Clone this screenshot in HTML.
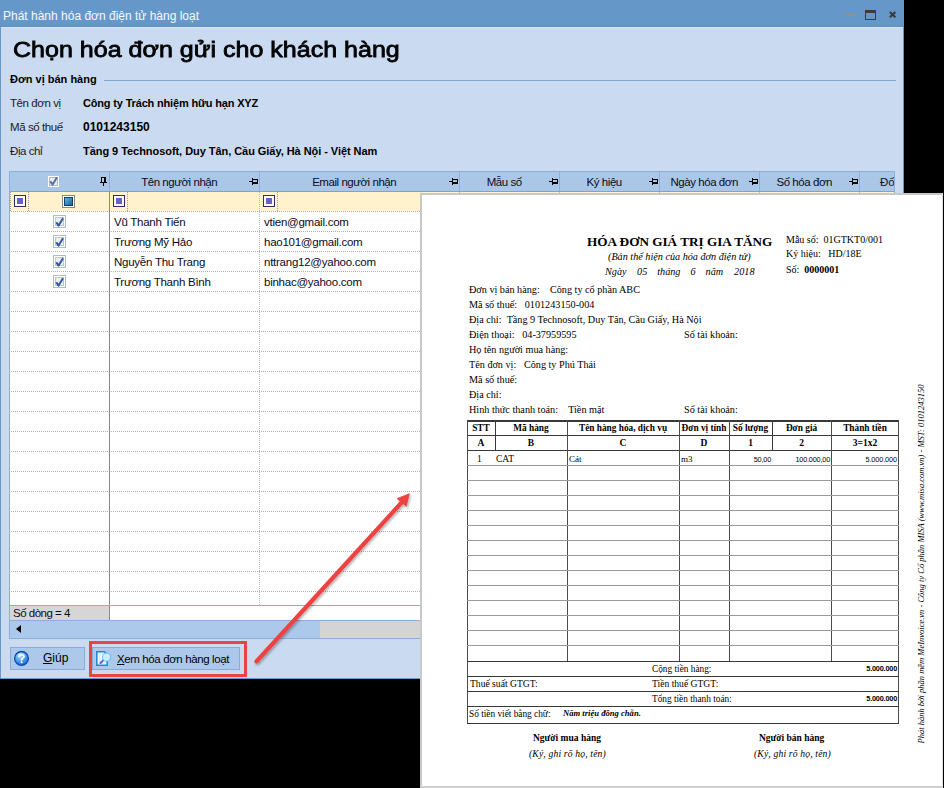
<!DOCTYPE html><html><head><meta charset="utf-8"><style>
*{margin:0;padding:0;box-sizing:border-box}
html,body{width:944px;height:788px;overflow:hidden;background:#000}
body{position:relative;font-family:"Liberation Sans",sans-serif;font-size:11px;color:#000}
.a{position:absolute;white-space:nowrap}
.s{font-family:"Liberation Serif",serif}
</style></head><body>
<div class="a" style="left:0px;top:0px;width:904px;height:679px;background:#CADBF1"></div>
<div class="a" style="left:0px;top:0px;width:904px;height:27px;background:#6697C9"></div>
<div class="a" style="left:0px;top:26px;width:904px;height:1px;background:#5E90C6"></div>
<div class="a" style="left:1px;top:27px;width:902px;height:1px;background:#DAE6F6"></div>
<div class="a" style="left:0px;top:27px;width:1px;height:652px;background:#6697C9"></div>
<div class="a" style="left:903px;top:27px;width:1px;height:652px;background:#6697C9"></div>
<div class="a" style="left:0px;top:678px;width:904px;height:1px;background:#6697C9"></div>
<div class="a" style="left:3px;top:8px;font-size:12px;line-height:16px;color:#f6f9fc">Phát hành hóa đơn điện tử hàng loạt</div>
<div class="a" style="left:846px;top:14px;width:9px;height:2px;background:#9A8E88"></div>
<div class="a" style="left:865px;top:10px;width:11px;height:10px;border:1.5px solid #3c3c3c;border-top-width:3px"></div>
<svg class="a" style="left:888px;top:10px" width="10" height="10" viewBox="0 0 10 10"><path d="M1.9 2L7.4 7.3M7.4 2L1.9 7.3" stroke="#3a3a3a" stroke-width="2"/></svg>
<div class="a" style="left:13px;top:36px;font-size:22px;line-height:28px;-webkit-text-stroke:0.8px #000;transform-origin:0 0;transform:scaleX(1.138)">Chọn hóa đơn gửi cho khách hàng</div>
<div class="a" style="left:10px;top:71.5px;font-size:11px;font-weight:bold;line-height:14px">Đơn vị bán hàng</div>
<div class="a" style="left:104px;top:80px;width:792px;height:1px;background:#7FA3D3"></div>
<div class="a" style="left:10px;top:96px;font-size:11.5px;line-height:14px;color:#1a1a2a;letter-spacing:-0.42px">Tên đơn vị</div>
<div class="a" style="left:83px;top:96px;font-size:11px;font-weight:bold;line-height:15px;letter-spacing:-0.17px">Công ty Trách nhiệm hữu hạn XYZ</div>
<div class="a" style="left:10px;top:120px;font-size:11.5px;line-height:14px;color:#1a1a2a;letter-spacing:-0.42px">Mã số thuế</div>
<div class="a" style="left:83px;top:120px;font-size:12px;font-weight:bold;line-height:15px;letter-spacing:0px">0101243150</div>
<div class="a" style="left:10px;top:144px;font-size:11.5px;line-height:14px;color:#1a1a2a;letter-spacing:-0.42px">Địa chỉ</div>
<div class="a" style="left:83px;top:144px;font-size:11px;font-weight:bold;line-height:15px;letter-spacing:-0.05px">Tầng 9 Technosoft, Duy Tân, Cầu Giấy, Hà Nội - Việt Nam</div>
<div class="a" style="left:9px;top:171px;width:886px;height:468px;background:#fff"></div>
<div class="a" style="left:9px;top:171px;width:886px;height:21px;background:#ABC7E7;border-top:1px solid #86A9D8;border-bottom:1px solid #7FA2D2"></div>
<div class="a" style="left:109px;top:172px;width:1px;height:19px;background:#8CAEDA"></div>
<div class="a" style="left:259px;top:172px;width:1px;height:19px;background:#8CAEDA"></div>
<div class="a" style="left:459px;top:172px;width:1px;height:19px;background:#8CAEDA"></div>
<div class="a" style="left:559px;top:172px;width:1px;height:19px;background:#8CAEDA"></div>
<div class="a" style="left:659px;top:172px;width:1px;height:19px;background:#8CAEDA"></div>
<div class="a" style="left:759px;top:172px;width:1px;height:19px;background:#8CAEDA"></div>
<div class="a" style="left:859px;top:172px;width:1px;height:19px;background:#8CAEDA"></div>
<div class="a" style="left:110.2px;top:174.5px;width:138px;text-align:center;font-size:11.5px;line-height:15px;color:#0a0a1e;letter-spacing:-0.45px">Tên người nhận</div>
<div class="a" style="left:249px;top:181px;width:3px;height:1px;background:#000"></div>
<div class="a" style="left:252px;top:178px;width:1px;height:7px;background:#000"></div>
<div class="a" style="left:253px;top:179px;width:5px;height:1px;background:#000"></div>
<div class="a" style="left:257px;top:179px;width:1px;height:5px;background:#000"></div>
<div class="a" style="left:253px;top:182px;width:5px;height:2px;background:#000"></div>
<div class="a" style="left:260.2px;top:174.5px;width:188px;text-align:center;font-size:11.5px;line-height:15px;color:#0a0a1e;letter-spacing:-0.45px">Email người nhận</div>
<div class="a" style="left:449px;top:181px;width:3px;height:1px;background:#000"></div>
<div class="a" style="left:452px;top:178px;width:1px;height:7px;background:#000"></div>
<div class="a" style="left:453px;top:179px;width:5px;height:1px;background:#000"></div>
<div class="a" style="left:457px;top:179px;width:1px;height:5px;background:#000"></div>
<div class="a" style="left:453px;top:182px;width:5px;height:2px;background:#000"></div>
<div class="a" style="left:460.2px;top:174.5px;width:88px;text-align:center;font-size:11.5px;line-height:15px;color:#0a0a1e;letter-spacing:-0.45px">Mẫu số</div>
<div class="a" style="left:549px;top:181px;width:3px;height:1px;background:#000"></div>
<div class="a" style="left:552px;top:178px;width:1px;height:7px;background:#000"></div>
<div class="a" style="left:553px;top:179px;width:5px;height:1px;background:#000"></div>
<div class="a" style="left:557px;top:179px;width:1px;height:5px;background:#000"></div>
<div class="a" style="left:553px;top:182px;width:5px;height:2px;background:#000"></div>
<div class="a" style="left:560.2px;top:174.5px;width:88px;text-align:center;font-size:11.5px;line-height:15px;color:#0a0a1e;letter-spacing:-0.45px">Ký hiệu</div>
<div class="a" style="left:649px;top:181px;width:3px;height:1px;background:#000"></div>
<div class="a" style="left:652px;top:178px;width:1px;height:7px;background:#000"></div>
<div class="a" style="left:653px;top:179px;width:5px;height:1px;background:#000"></div>
<div class="a" style="left:657px;top:179px;width:1px;height:5px;background:#000"></div>
<div class="a" style="left:653px;top:182px;width:5px;height:2px;background:#000"></div>
<div class="a" style="left:660.2px;top:174.5px;width:88px;text-align:center;font-size:11.5px;line-height:15px;color:#0a0a1e;letter-spacing:-0.45px">Ngày hóa đơn</div>
<div class="a" style="left:749px;top:181px;width:3px;height:1px;background:#000"></div>
<div class="a" style="left:752px;top:178px;width:1px;height:7px;background:#000"></div>
<div class="a" style="left:753px;top:179px;width:5px;height:1px;background:#000"></div>
<div class="a" style="left:757px;top:179px;width:1px;height:5px;background:#000"></div>
<div class="a" style="left:753px;top:182px;width:5px;height:2px;background:#000"></div>
<div class="a" style="left:760.2px;top:174.5px;width:88px;text-align:center;font-size:11.5px;line-height:15px;color:#0a0a1e;letter-spacing:-0.45px">Số hóa đơn</div>
<div class="a" style="left:849px;top:181px;width:3px;height:1px;background:#000"></div>
<div class="a" style="left:852px;top:178px;width:1px;height:7px;background:#000"></div>
<div class="a" style="left:853px;top:179px;width:5px;height:1px;background:#000"></div>
<div class="a" style="left:857px;top:179px;width:1px;height:5px;background:#000"></div>
<div class="a" style="left:853px;top:182px;width:5px;height:2px;background:#000"></div>
<div class="a" style="left:880px;top:175px;font-size:11.5px;line-height:15px;color:#141428">Đố</div>
<div class="a" style="left:101px;top:177px;width:5px;height:1px;background:#000"></div>
<div class="a" style="left:101px;top:177px;width:1px;height:5px;background:#000"></div>
<div class="a" style="left:104px;top:177px;width:2px;height:5px;background:#000"></div>
<div class="a" style="left:100px;top:182px;width:7px;height:1px;background:#000"></div>
<div class="a" style="left:103px;top:183px;width:1px;height:3px;background:#000"></div>
<div class="a" style="left:48px;top:176px;width:11px;height:11px;background:#fff"></div>
<div class="a" style="left:49px;top:177px;width:9px;height:9px;border:1px solid #b9b9b9;background:#e9ecf2"></div>
<svg class="a" style="left:49px;top:176px" width="9" height="10" viewBox="0 0 9 10"><path d="M1.3 5.2L3.6 8.6L8 1.2" stroke="#5273aa" stroke-width="2" fill="none" stroke-linejoin="round"/></svg>
<div class="a" style="left:10px;top:192px;width:885px;height:19px;background:#FFF2CC"></div>
<div class="a" style="left:14px;top:195px;width:12px;height:12px;border:1px solid #2E2D6E;background:#FFFBEE"></div>
<div class="a" style="left:17px;top:198px;width:6px;height:6px;background:#6560D4"></div>
<div class="a" style="left:10px;top:192px;width:1px;height:19px;background-image:linear-gradient(#999 50%,transparent 50%);background-size:1px 2px"></div>
<div class="a" style="left:28px;top:192px;width:1px;height:19px;background-image:linear-gradient(#999 50%,transparent 50%);background-size:1px 2px"></div>
<div class="a" style="left:62px;top:195px;width:13px;height:13px;border:1px solid #888;background:#fff"></div>
<div class="a" style="left:64px;top:197px;width:9px;height:9px;background:linear-gradient(135deg,#5ab8e8,#1a5f98);border:1px solid #0f3f6a"></div>
<div class="a" style="left:113px;top:195px;width:12px;height:12px;border:1px solid #2E2D6E;background:#FFFBEE"></div>
<div class="a" style="left:116px;top:198px;width:6px;height:6px;background:#6560D4"></div>
<div class="a" style="left:127px;top:192px;width:1px;height:19px;background-image:linear-gradient(#999 50%,transparent 50%);background-size:1px 2px"></div>
<div class="a" style="left:263px;top:195px;width:12px;height:12px;border:1px solid #2E2D6E;background:#FFFBEE"></div>
<div class="a" style="left:266px;top:198px;width:6px;height:6px;background:#6560D4"></div>
<div class="a" style="left:277px;top:192px;width:1px;height:19px;background-image:linear-gradient(#999 50%,transparent 50%);background-size:1px 2px"></div>
<div class="a" style="left:10px;top:211px;width:885px;height:1px;background-image:linear-gradient(90deg,#b0b0b0 50%,transparent 50%);background-size:2px 1px;background-position:1px 0"></div>
<div class="a" style="left:10px;top:231px;width:885px;height:1px;background-image:linear-gradient(90deg,#b0b0b0 50%,transparent 50%);background-size:2px 1px;background-position:1px 0"></div>
<div class="a" style="left:10px;top:251px;width:885px;height:1px;background-image:linear-gradient(90deg,#b0b0b0 50%,transparent 50%);background-size:2px 1px;background-position:1px 0"></div>
<div class="a" style="left:10px;top:271px;width:885px;height:1px;background-image:linear-gradient(90deg,#b0b0b0 50%,transparent 50%);background-size:2px 1px;background-position:1px 0"></div>
<div class="a" style="left:10px;top:291px;width:885px;height:1px;background-image:linear-gradient(90deg,#b0b0b0 50%,transparent 50%);background-size:2px 1px;background-position:1px 0"></div>
<div class="a" style="left:10px;top:311px;width:885px;height:1px;background-image:linear-gradient(90deg,#b0b0b0 50%,transparent 50%);background-size:2px 1px;background-position:1px 0"></div>
<div class="a" style="left:10px;top:331px;width:885px;height:1px;background-image:linear-gradient(90deg,#b0b0b0 50%,transparent 50%);background-size:2px 1px;background-position:1px 0"></div>
<div class="a" style="left:10px;top:351px;width:885px;height:1px;background-image:linear-gradient(90deg,#b0b0b0 50%,transparent 50%);background-size:2px 1px;background-position:1px 0"></div>
<div class="a" style="left:10px;top:371px;width:885px;height:1px;background-image:linear-gradient(90deg,#b0b0b0 50%,transparent 50%);background-size:2px 1px;background-position:1px 0"></div>
<div class="a" style="left:10px;top:391px;width:885px;height:1px;background-image:linear-gradient(90deg,#b0b0b0 50%,transparent 50%);background-size:2px 1px;background-position:1px 0"></div>
<div class="a" style="left:10px;top:411px;width:885px;height:1px;background-image:linear-gradient(90deg,#b0b0b0 50%,transparent 50%);background-size:2px 1px;background-position:1px 0"></div>
<div class="a" style="left:10px;top:431px;width:885px;height:1px;background-image:linear-gradient(90deg,#b0b0b0 50%,transparent 50%);background-size:2px 1px;background-position:1px 0"></div>
<div class="a" style="left:10px;top:451px;width:885px;height:1px;background-image:linear-gradient(90deg,#b0b0b0 50%,transparent 50%);background-size:2px 1px;background-position:1px 0"></div>
<div class="a" style="left:10px;top:471px;width:885px;height:1px;background-image:linear-gradient(90deg,#b0b0b0 50%,transparent 50%);background-size:2px 1px;background-position:1px 0"></div>
<div class="a" style="left:10px;top:491px;width:885px;height:1px;background-image:linear-gradient(90deg,#b0b0b0 50%,transparent 50%);background-size:2px 1px;background-position:1px 0"></div>
<div class="a" style="left:10px;top:511px;width:885px;height:1px;background-image:linear-gradient(90deg,#b0b0b0 50%,transparent 50%);background-size:2px 1px;background-position:1px 0"></div>
<div class="a" style="left:10px;top:531px;width:885px;height:1px;background-image:linear-gradient(90deg,#b0b0b0 50%,transparent 50%);background-size:2px 1px;background-position:1px 0"></div>
<div class="a" style="left:10px;top:551px;width:885px;height:1px;background-image:linear-gradient(90deg,#b0b0b0 50%,transparent 50%);background-size:2px 1px;background-position:1px 0"></div>
<div class="a" style="left:10px;top:571px;width:885px;height:1px;background-image:linear-gradient(90deg,#b0b0b0 50%,transparent 50%);background-size:2px 1px;background-position:1px 0"></div>
<div class="a" style="left:10px;top:591px;width:885px;height:1px;background-image:linear-gradient(90deg,#b0b0b0 50%,transparent 50%);background-size:2px 1px;background-position:1px 0"></div>
<div class="a" style="left:109px;top:192px;width:1px;height:413px;background:#8a8a8a"></div>
<div class="a" style="left:259px;top:192px;width:1px;height:413px;background-image:linear-gradient(#bcbcbc 50%,transparent 50%);background-size:1px 2px"></div>
<div class="a" style="left:459px;top:192px;width:1px;height:413px;background-image:linear-gradient(#bcbcbc 50%,transparent 50%);background-size:1px 2px"></div>
<div class="a" style="left:559px;top:192px;width:1px;height:413px;background-image:linear-gradient(#bcbcbc 50%,transparent 50%);background-size:1px 2px"></div>
<div class="a" style="left:659px;top:192px;width:1px;height:413px;background-image:linear-gradient(#bcbcbc 50%,transparent 50%);background-size:1px 2px"></div>
<div class="a" style="left:759px;top:192px;width:1px;height:413px;background-image:linear-gradient(#bcbcbc 50%,transparent 50%);background-size:1px 2px"></div>
<div class="a" style="left:859px;top:192px;width:1px;height:413px;background-image:linear-gradient(#bcbcbc 50%,transparent 50%);background-size:1px 2px"></div>
<div class="a" style="left:53px;top:215px;width:13px;height:13px;border:1px solid #A6BCE4;background:#fff"></div>
<div class="a" style="left:55px;top:217px;width:9px;height:9px;border:1px solid #c4c4c4;background:#eceef3"></div>
<svg class="a" style="left:55px;top:217px" width="9" height="10" viewBox="0 0 9 10"><path d="M1.3 5.2L3.6 8.6L8 1.2" stroke="#2F5A9A" stroke-width="2" fill="none" stroke-linejoin="round"/></svg>
<div class="a" style="left:114px;top:215px;font-size:11.5px;line-height:15px;color:#0a0a1e;letter-spacing:-0.25px">Vũ Thanh Tiến</div>
<div class="a" style="left:264px;top:215px;font-size:11.5px;line-height:15px;color:#0a0a1e;letter-spacing:-0.25px">vtien@gmail.com</div>
<div class="a" style="left:53px;top:235px;width:13px;height:13px;border:1px solid #A6BCE4;background:#fff"></div>
<div class="a" style="left:55px;top:237px;width:9px;height:9px;border:1px solid #c4c4c4;background:#eceef3"></div>
<svg class="a" style="left:55px;top:237px" width="9" height="10" viewBox="0 0 9 10"><path d="M1.3 5.2L3.6 8.6L8 1.2" stroke="#2F5A9A" stroke-width="2" fill="none" stroke-linejoin="round"/></svg>
<div class="a" style="left:114px;top:235px;font-size:11.5px;line-height:15px;color:#0a0a1e;letter-spacing:-0.25px">Trương Mỹ Hảo</div>
<div class="a" style="left:264px;top:235px;font-size:11.5px;line-height:15px;color:#0a0a1e;letter-spacing:-0.25px">hao101@gmail.com</div>
<div class="a" style="left:53px;top:255px;width:13px;height:13px;border:1px solid #A6BCE4;background:#fff"></div>
<div class="a" style="left:55px;top:257px;width:9px;height:9px;border:1px solid #c4c4c4;background:#eceef3"></div>
<svg class="a" style="left:55px;top:257px" width="9" height="10" viewBox="0 0 9 10"><path d="M1.3 5.2L3.6 8.6L8 1.2" stroke="#2F5A9A" stroke-width="2" fill="none" stroke-linejoin="round"/></svg>
<div class="a" style="left:114px;top:255px;font-size:11.5px;line-height:15px;color:#0a0a1e;letter-spacing:-0.25px">Nguyễn Thu Trang</div>
<div class="a" style="left:264px;top:255px;font-size:11.5px;line-height:15px;color:#0a0a1e;letter-spacing:-0.25px">nttrang12@yahoo.com</div>
<div class="a" style="left:53px;top:275px;width:13px;height:13px;border:1px solid #A6BCE4;background:#fff"></div>
<div class="a" style="left:55px;top:277px;width:9px;height:9px;border:1px solid #c4c4c4;background:#eceef3"></div>
<svg class="a" style="left:55px;top:277px" width="9" height="10" viewBox="0 0 9 10"><path d="M1.3 5.2L3.6 8.6L8 1.2" stroke="#2F5A9A" stroke-width="2" fill="none" stroke-linejoin="round"/></svg>
<div class="a" style="left:114px;top:275px;font-size:11.5px;line-height:15px;color:#0a0a1e;letter-spacing:-0.25px">Trương Thanh Bình</div>
<div class="a" style="left:264px;top:275px;font-size:11.5px;line-height:15px;color:#0a0a1e;letter-spacing:-0.25px">binhac@yahoo.com</div>
<div class="a" style="left:10px;top:605px;width:885px;height:1px;background:#8CAEDA"></div>
<div class="a" style="left:10px;top:606px;width:99px;height:14px;background:#D6D6D6"></div>
<div class="a" style="left:109px;top:606px;width:1px;height:14px;background:#8a8a8a"></div>
<div class="a" style="left:13px;top:606px;font-size:11.5px;line-height:14px;color:#0a0a1e;letter-spacing:-0.5px">Số dòng = 4</div>
<div class="a" style="left:10px;top:620px;width:885px;height:1px;background:#8CAEDA"></div>
<div class="a" style="left:10px;top:621px;width:885px;height:17px;background:#D4D4D4"></div>
<div class="a" style="left:10px;top:621px;width:310px;height:17px;background:#ACC8EA"></div>
<svg class="a" style="left:16px;top:625px" width="5" height="8" viewBox="0 0 5 8"><path d="M5 0V8L0 4Z" fill="#000"/></svg>
<div class="a" style="left:9px;top:171px;width:886px;height:468px;border:1px solid #8CAEDA"></div>
<div class="a" style="left:10px;top:647px;width:75px;height:23px;background:#ACC8EA;border:1px solid #8DAAD2"></div>
<svg class="a" style="left:13px;top:650px" width="18" height="18" viewBox="0 0 18 18"><defs><radialGradient id="hg" cx="40%" cy="30%" r="70%"><stop offset="0" stop-color="#bfe0ff"/><stop offset="0.6" stop-color="#4a9af0"/><stop offset="1" stop-color="#1f6fd8"/></radialGradient></defs><circle cx="8.5" cy="8.4" r="6.9" fill="url(#hg)" stroke="#0c4fae" stroke-width="1.3"/><path d="M6 6.3C6 4.2 11 4 11 6.4C11 8 8.6 8 8.6 10" stroke="#fff" stroke-width="1.7" fill="none" stroke-linecap="round"/><circle cx="8.6" cy="12.3" r="1" fill="#fff"/></svg>
<div class="a" style="left:43px;top:651px;font-size:12px;line-height:14px;color:#000"><u>G</u>iúp</div>
<div class="a" style="left:92px;top:647px;width:148px;height:23px;background:#ACC8EA;border:1px solid #8DAAD2"></div>
<svg class="a" style="left:95px;top:650px" width="18" height="18" viewBox="0 0 18 18"><path d="M1.8 1.8H9.5L12.2 4.5V15.2H1.8Z" fill="#f2fbff" stroke="#1E88E0" stroke-width="1.6"/><path d="M3.6 3.6H8M4.6 3.6V13M3.6 13.2H10" stroke="#d6ecfa" stroke-width="1.4"/><circle cx="11.5" cy="7.2" r="4.1" fill="#c8eefb" stroke="#68b8e8" stroke-width="1"/><path d="M5.5 13L7.8 10.8" stroke="#7a55d0" stroke-width="2" stroke-linecap="round"/></svg>
<div class="a" style="left:117px;top:652px;font-size:11.5px;line-height:14px;color:#000;letter-spacing:-0.38px"><u>X</u>em hóa đơn hàng loạt</div>
<div class="a" style="left:89px;top:641px;width:158px;height:36px;border:3px solid #E84444"></div>
<div class="a" style="left:420px;top:193px;width:524px;height:595px;background:#fff"></div>
<div class="a" style="left:420px;top:193px;width:524px;height:2px;background:#c8c8c8"></div>
<div class="a" style="left:420px;top:193px;width:2px;height:595px;background:#c8c8c8"></div>
<div class="a" style="left:420px;top:786px;width:524px;height:2px;background:#cfcfcf"></div>
<div class="a" style="left:942px;top:193px;width:1px;height:595px;background:#e2e2e2"></div>
<div class="a" style="left:943px;top:193px;width:1px;height:595px;background:#000"></div>
<div class="a" style="left:587px;top:234.46px;font-family:'Liberation Serif',serif;font-size:13.2px;line-height:15.180px;font-weight:bold">HÓA ĐƠN GIÁ TRỊ GIA TĂNG</div>
<div class="a" style="left:608px;top:251.49px;font-family:'Liberation Serif',serif;font-size:10.2px;line-height:11.730px;font-style:italic">(Bản thể hiện của hóa đơn điện tử)</div>
<div class="a" style="left:605px;top:265.69px;font-family:'Liberation Serif',serif;font-size:10.2px;line-height:11.730px;font-style:italic;word-spacing:0">Ngày <span style="margin-left:8px">05</span><span style="margin-left:10px">tháng</span><span style="margin-left:10px">6</span><span style="margin-left:10px">năm</span><span style="margin-left:11px">2018</span></div>
<div class="a" style="left:786px;top:233.88px;font-family:'Liberation Serif',serif;font-size:10px;line-height:11.500px;">Mẫu số: &nbsp;01GTKT0/001</div>
<div class="a" style="left:786px;top:248.38px;font-family:'Liberation Serif',serif;font-size:10px;line-height:11.500px;">Ký hiệu: &nbsp;&nbsp;HD/18E</div>
<div class="a" style="left:786px;top:264.38px;font-family:'Liberation Serif',serif;font-size:10px;line-height:11.500px;">Số: &nbsp;<b>0000001</b></div>
<div class="a" style="left:469px;top:283.99px;font-family:'Liberation Serif',serif;font-size:10.2px;line-height:11.730px;">Đơn vị bán hàng: &nbsp;&nbsp;&nbsp;Công ty cổ phần ABC</div>
<div class="a" style="left:469px;top:298.99px;font-family:'Liberation Serif',serif;font-size:10.2px;line-height:11.730px;">Mã số thuế: &nbsp;&nbsp;0101243150-004</div>
<div class="a" style="left:469px;top:313.99px;font-family:'Liberation Serif',serif;font-size:10.2px;line-height:11.730px;">Địa chỉ: &nbsp;Tầng 9 Technosoft, Duy Tân, Cầu Giấy, Hà Nội</div>
<div class="a" style="left:469px;top:328.99px;font-family:'Liberation Serif',serif;font-size:10.2px;line-height:11.730px;">Điện thoại: &nbsp;&nbsp;04-37959595</div>
<div class="a" style="left:469px;top:343.99px;font-family:'Liberation Serif',serif;font-size:10.2px;line-height:11.730px;">Họ tên người mua hàng:</div>
<div class="a" style="left:469px;top:358.99px;font-family:'Liberation Serif',serif;font-size:10.2px;line-height:11.730px;">Tên đơn vị: &nbsp;&nbsp;Công ty Phú Thái</div>
<div class="a" style="left:469px;top:373.99px;font-family:'Liberation Serif',serif;font-size:10.2px;line-height:11.730px;">Mã số thuế:</div>
<div class="a" style="left:469px;top:388.99px;font-family:'Liberation Serif',serif;font-size:10.2px;line-height:11.730px;">Địa chỉ:</div>
<div class="a" style="left:469px;top:403.99px;font-family:'Liberation Serif',serif;font-size:10.2px;line-height:11.730px;">Hình thức thanh toán: &nbsp;&nbsp;&nbsp;Tiền mặt</div>
<div class="a" style="left:684px;top:328.99px;font-family:'Liberation Serif',serif;font-size:10.2px;line-height:11.730px;">Số tài khoản:</div>
<div class="a" style="left:684px;top:403.99px;font-family:'Liberation Serif',serif;font-size:10.2px;line-height:11.730px;">Số tài khoản:</div>
<div class="a" style="left:467px;top:420px;width:432px;height:2px;background:#383838"></div>
<div class="a" style="left:467px;top:435px;width:432px;height:1px;background:#383838"></div>
<div class="a" style="left:467px;top:450px;width:432px;height:1px;background:#383838"></div>
<div class="a" style="left:467px;top:420px;width:1px;height:304px;background:#4a4a4a"></div>
<div class="a" style="left:898px;top:420px;width:1px;height:304px;background:#4a4a4a"></div>
<div class="a" style="left:567px;top:420px;width:1px;height:241px;background:#4a4a4a"></div>
<div class="a" style="left:679px;top:420px;width:1px;height:241px;background:#4a4a4a"></div>
<div class="a" style="left:729px;top:420px;width:1px;height:241px;background:#4a4a4a"></div>
<div class="a" style="left:831px;top:420px;width:1px;height:241px;background:#4a4a4a"></div>
<div class="a" style="left:495px;top:420px;width:1px;height:30px;background:#383838"></div>
<div class="a" style="left:772px;top:420px;width:1px;height:30px;background:#383838"></div>
<div class="a" style="left:467px;top:465px;width:432px;height:1px;background:#9a9a9a"></div>
<div class="a" style="left:467px;top:480px;width:432px;height:1px;background:#9a9a9a"></div>
<div class="a" style="left:467px;top:495px;width:432px;height:1px;background:#9a9a9a"></div>
<div class="a" style="left:467px;top:510px;width:432px;height:1px;background:#9a9a9a"></div>
<div class="a" style="left:467px;top:525px;width:432px;height:1px;background:#9a9a9a"></div>
<div class="a" style="left:467px;top:540px;width:432px;height:1px;background:#9a9a9a"></div>
<div class="a" style="left:467px;top:555px;width:432px;height:1px;background:#9a9a9a"></div>
<div class="a" style="left:467px;top:570px;width:432px;height:1px;background:#9a9a9a"></div>
<div class="a" style="left:467px;top:585px;width:432px;height:1px;background:#9a9a9a"></div>
<div class="a" style="left:467px;top:600px;width:432px;height:1px;background:#9a9a9a"></div>
<div class="a" style="left:467px;top:615px;width:432px;height:1px;background:#9a9a9a"></div>
<div class="a" style="left:467px;top:630px;width:432px;height:1px;background:#9a9a9a"></div>
<div class="a" style="left:467px;top:645px;width:432px;height:1px;background:#9a9a9a"></div>
<div class="a" style="left:467px;top:661px;width:432px;height:1px;background:#383838"></div>
<div class="a" style="left:467px;top:676px;width:432px;height:1px;background:#383838"></div>
<div class="a" style="left:467px;top:691px;width:432px;height:1px;background:#383838"></div>
<div class="a" style="left:467px;top:706px;width:432px;height:1px;background:#383838"></div>
<div class="a" style="left:467px;top:723px;width:432px;height:1px;background:#383838"></div>
<div class="a" style="left:467px;width:28px;text-align:center;top:423.01px;font-family:'Liberation Serif',serif;font-size:9.3px;line-height:10.695px;font-weight:bold">STT</div>
<div class="a" style="left:495px;width:72px;text-align:center;top:423.01px;font-family:'Liberation Serif',serif;font-size:9.3px;line-height:10.695px;font-weight:bold">Mã hàng</div>
<div class="a" style="left:567px;width:112px;text-align:center;top:423.01px;font-family:'Liberation Serif',serif;font-size:9.3px;line-height:10.695px;font-weight:bold">Tên hàng hóa, dịch vụ</div>
<div class="a" style="left:679px;width:50px;text-align:center;top:423.01px;font-family:'Liberation Serif',serif;font-size:9.3px;line-height:10.695px;font-weight:bold">Đơn vị tính</div>
<div class="a" style="left:729px;width:43px;text-align:center;top:423.01px;font-family:'Liberation Serif',serif;font-size:9.3px;line-height:10.695px;font-weight:bold">Số lượng</div>
<div class="a" style="left:772px;width:59px;text-align:center;top:423.01px;font-family:'Liberation Serif',serif;font-size:9.3px;line-height:10.695px;font-weight:bold">Đơn giá</div>
<div class="a" style="left:831px;width:68px;text-align:center;top:423.01px;font-family:'Liberation Serif',serif;font-size:9.3px;line-height:10.695px;font-weight:bold">Thành tiền</div>
<div class="a" style="left:467px;width:28px;text-align:center;top:437.63px;font-family:'Liberation Serif',serif;font-size:9.5px;line-height:10.925px;font-weight:bold">A</div>
<div class="a" style="left:495px;width:72px;text-align:center;top:437.63px;font-family:'Liberation Serif',serif;font-size:9.5px;line-height:10.925px;font-weight:bold">B</div>
<div class="a" style="left:567px;width:112px;text-align:center;top:437.63px;font-family:'Liberation Serif',serif;font-size:9.5px;line-height:10.925px;font-weight:bold">C</div>
<div class="a" style="left:679px;width:50px;text-align:center;top:437.63px;font-family:'Liberation Serif',serif;font-size:9.5px;line-height:10.925px;font-weight:bold">D</div>
<div class="a" style="left:729px;width:43px;text-align:center;top:437.63px;font-family:'Liberation Serif',serif;font-size:9.5px;line-height:10.925px;font-weight:bold">1</div>
<div class="a" style="left:772px;width:59px;text-align:center;top:437.63px;font-family:'Liberation Serif',serif;font-size:9.5px;line-height:10.925px;font-weight:bold">2</div>
<div class="a" style="left:831px;width:68px;text-align:center;top:437.63px;font-family:'Liberation Serif',serif;font-size:9.5px;line-height:10.925px;font-weight:bold">3=1x2</div>
<div class="a" style="left:477px;top:453.83px;font-family:'Liberation Serif',serif;font-size:9.5px;line-height:10.925px;">1</div>
<div class="a" style="left:496px;top:453.83px;font-family:'Liberation Serif',serif;font-size:9.5px;line-height:10.925px;">CAT</div>
<div class="a" style="left:569px;top:454.29px;font-family:'Liberation Serif',serif;font-size:9px;line-height:10.350px;">Cát</div>
<div class="a" style="left:681px;top:454.29px;font-family:'Liberation Serif',serif;font-size:9px;line-height:10.350px;">m3</div>
<div class="a" style="right:173px;top:455.77px;font-family:'Liberation Sans',sans-serif;font-size:7.3px;line-height:8.395px;letter-spacing:-0.2px">50,00</div>
<div class="a" style="right:114px;top:455.77px;font-family:'Liberation Sans',sans-serif;font-size:7.3px;line-height:8.395px;letter-spacing:-0.2px">100.000,00</div>
<div class="a" style="right:47px;top:455.77px;font-family:'Liberation Sans',sans-serif;font-size:7.3px;line-height:8.395px;letter-spacing:-0.1px">5.000.000</div>
<div class="a" style="left:652px;top:663.71px;font-family:'Liberation Serif',serif;font-size:9.3px;line-height:10.695px;">Cộng tiền hàng:</div>
<div class="a" style="right:47px;top:664.77px;font-family:'Liberation Sans',sans-serif;font-size:7.3px;line-height:8.395px;font-weight:bold;letter-spacing:-0.2px">5.000.000</div>
<div class="a" style="left:470px;top:678.24px;font-family:'Liberation Serif',serif;font-size:9.6px;line-height:11.040px;">Thuế suất GTGT:</div>
<div class="a" style="left:652px;top:678.24px;font-family:'Liberation Serif',serif;font-size:9.6px;line-height:11.040px;">Tiền thuế GTGT:</div>
<div class="a" style="left:652px;top:693.51px;font-family:'Liberation Serif',serif;font-size:9.3px;line-height:10.695px;">Tổng tiền thanh toán:</div>
<div class="a" style="right:47px;top:694.77px;font-family:'Liberation Sans',sans-serif;font-size:7.3px;line-height:8.395px;font-weight:bold;letter-spacing:-0.2px">5.000.000</div>
<div class="a" style="left:469px;top:708.71px;font-family:'Liberation Serif',serif;font-size:9.3px;line-height:10.695px;">Số tiền viết bằng chữ:</div>
<div class="a" style="left:563px;top:709.35px;font-family:'Liberation Serif',serif;font-size:8.6px;line-height:9.890px;font-weight:bold;font-style:italic">Năm triệu đồng chẵn.</div>
<div class="a" style="left:533px;top:732.83px;font-family:'Liberation Serif',serif;font-size:9.5px;line-height:10.925px;font-weight:bold">Người mua hàng</div>
<div class="a" style="left:529px;top:748.24px;font-family:'Liberation Serif',serif;font-size:9.6px;line-height:11.040px;font-style:italic;letter-spacing:0.17px">(Ký, ghi rõ họ, tên)</div>
<div class="a" style="left:759px;top:732.83px;font-family:'Liberation Serif',serif;font-size:9.5px;line-height:10.925px;font-weight:bold">Người bán hàng</div>
<div class="a" style="left:754px;top:748.24px;font-family:'Liberation Serif',serif;font-size:9.6px;line-height:11.040px;font-style:italic;letter-spacing:0.17px">(Ký, ghi rõ họ, tên)</div>
<div class="a" style="left:920.5px;top:564px;width:0;height:0"><div style="position:absolute;left:0;top:0;transform:translate(-50%,-50%) rotate(-90deg);font-family:'Liberation Serif',serif;font-size:8.5px;line-height:10px;font-style:italic;white-space:nowrap">Phát hành bởi phần mềm MeInvoice.vn - Công ty Cổ phần MISA (www.misa.com.vn) - MST: 0101243150</div></div>
<svg class="a" style="left:0;top:0" width="944" height="788" viewBox="0 0 944 788"><defs><filter id="sh" x="-20%" y="-20%" width="140%" height="140%"><feDropShadow dx="1.2" dy="1.8" stdDeviation="1.3" flood-color="#000" flood-opacity="0.3"/></filter></defs><g filter="url(#sh)"><path d="M256.4 661.5L402.5 501.5" stroke="#EE4242" stroke-width="4.1" stroke-linecap="round"/><path d="M409.4 493.8L397 498.6L406.2 506.2Z" fill="#EE4242" stroke="#EE4242" stroke-width="0.8" stroke-linejoin="round"/></g></svg>
</body></html>
